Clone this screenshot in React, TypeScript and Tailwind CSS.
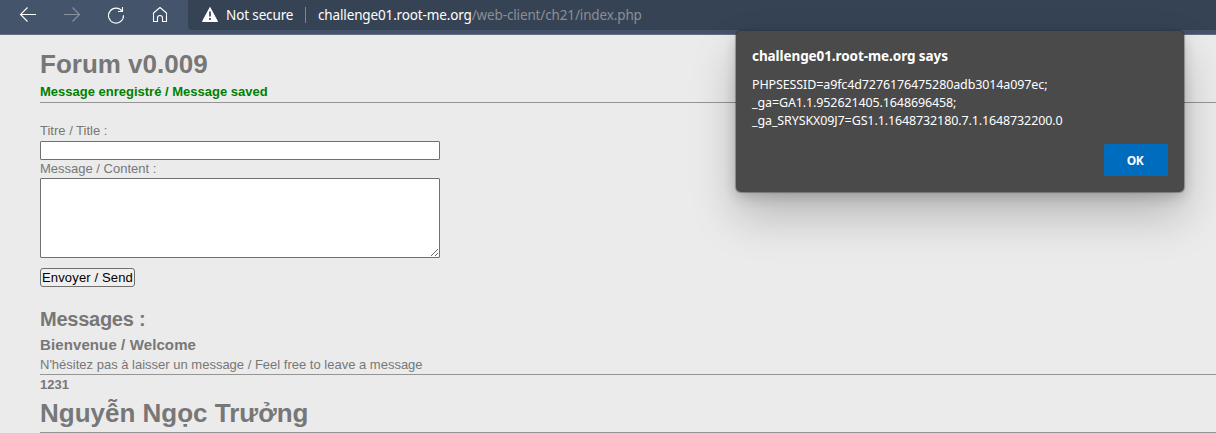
import React from 'react';

function Toolbar() {
  return (
    <header className="flex h-[35px] border-b border-[#656b84] bg-[#44546a]">
      <nav className="flex w-[188px] shrink-0 text-white">
        <svg width="188" height="34" viewBox="0 0 188 34" fill="none" stroke="currentColor" strokeWidth="1.1">
          <path d="M36 14.5H20.5M27.5 7.5l-7 7 7 7" />
          <path d="M64 14.5h15.5M72.500 7.500l7 7-7 7" stroke="#8792a1" />
          <path d="M122.300 11.500a7.500 7.500 0 1 0 1.200 3.700M122.500 7v4.500h-4.500" />
          <path d="M153.500 13l6.500-5.500 6.500 5.500v8.500h-4v-3.500a2.500 2.500 0 0 0-5 0v3.500h-4z" strokeLinejoin="round" />
        </svg>
      </nav>
      <div className="flex h-[30px] flex-1 items-center rounded-bl bg-[#364354] pl-[14px] font-['Noto_Sans',sans-serif] text-sm text-white">
        <svg width="16" height="30" viewBox="0 0 16 30" className="shrink-0">
          <path d="M8 7.500L15.500 21.500H.5z" fill="#fff" stroke="#fff" strokeLinejoin="round" />
          <path d="M8 11.500v5M8 18v2" stroke="#364354" strokeWidth="1.700" />
        </svg>
        <span className="ml-2 w-[68px] whitespace-nowrap pt-[2px] text-[13.5px] tracking-[-0.13px]">Not secure</span>
        <span className="ml-[11px] h-4 w-px bg-[#7d8794]" />
        <span className="ml-3 whitespace-nowrap pt-[2px] text-[13.5px] tracking-[-0.14px]">
          challenge01.root-me.org<span className="text-[#8b8f94]">/web-client/ch21/index.php</span>
        </span>
      </div>
    </header>
  );
}

function Dialog() {
  return (
    <section
      role="alertdialog"
      className="absolute left-[736px] top-[31px] flex h-[161px] w-[448px] flex-col rounded-[5px] bg-[#4a4a4a] px-4 pt-4 font-['Noto_Sans',sans-serif] text-white shadow-[0_0_1px_1px_rgba(0,0,0,0.3),0_5px_14px_rgba(0,0,0,0.18),0_24px_46px_rgba(0,0,0,0.22)]"
    >
      <h2 className="h-[18px] whitespace-nowrap text-[13.5px] font-bold leading-[18px] tracking-[-0.08px]">challenge01.root-me.org says</h2>
      <div className="mt-[11px] whitespace-nowrap text-[12.5px] leading-[18px] tracking-[-0.12px]">
        <p>PHPSESSID=a9fc4d7276176475280adb3014a097ec;</p>
        <p>_ga=GA1.1.952621405.1648696458;</p>
        <p>_ga_SRYSKX09J7=GS1.1.1648732180.7.1.1648732200.0</p>
      </div>
      <button className="mt-[14px] h-8 w-16 self-end rounded-[2px] bg-[#006cbe] pr-[2px] text-[12px] font-bold tracking-[-0.5px]">OK</button>
    </section>
  );
}

export default function App() {
  return (
    <div className="relative h-[433px] w-[1216px] overflow-hidden bg-[#ebebeb] font-['Liberation_Sans',sans-serif] text-[13px] leading-[15px] text-[#777]">
      <Toolbar />
      <main className="flex flex-col pl-10 pt-[14px]">
        <h1 className="h-[30px] text-[26px] font-bold leading-[30px]">Forum v0.009</h1>
        <p className="mt-[5px] font-bold text-[#008000]">Message enregistré / Message saved</p>
        <div className="mt-[3px] h-px bg-[#959595]" />
        <form className="mt-5 flex flex-col items-start">
          <label htmlFor="title">Titre / Title :</label>
          <input id="title" className="mt-[3px] h-[19px] w-[400px] rounded-[1px] border border-[#707070] bg-white" />
          <label htmlFor="content" className="mt-px">Message / Content :</label>
          <textarea id="content" className="mt-[2px] block h-20 w-[400px] rounded-[1px] border border-[#707070] bg-white" />
          <button type="button" className="mt-[10px] flex h-[19px] w-[95px] items-center whitespace-nowrap rounded-[3px] border border-[#707070] bg-[#efefef] pl-px tracking-[0.15px] text-black">
            Envoyer / Send
          </button>
        </form>
        <h2 className="mt-5 h-6 text-[20px] font-bold leading-6 tracking-[-0.25px]">Messages :</h2>
        <h3 className="mt-[5px] h-[17px] text-[15px] font-bold leading-[17px] tracking-[0.11px]">Bienvenue / Welcome</h3>
        <p className="mt-1">N'hésitez pas à laisser un message / Feel free to leave a message</p>
        <div className="mt-[2px] h-px bg-[#959595]" />
        <p className="mt-[2px] font-bold">1231</p>
        <h1 className="mt-[6px] h-[30px] text-[26px] font-bold leading-[30px]">Nguyễn Ngọc Trưởng</h1>
        <div className="mt-1 h-px bg-[#959595]" />
      </main>
      <Dialog />
    </div>
  );
}
